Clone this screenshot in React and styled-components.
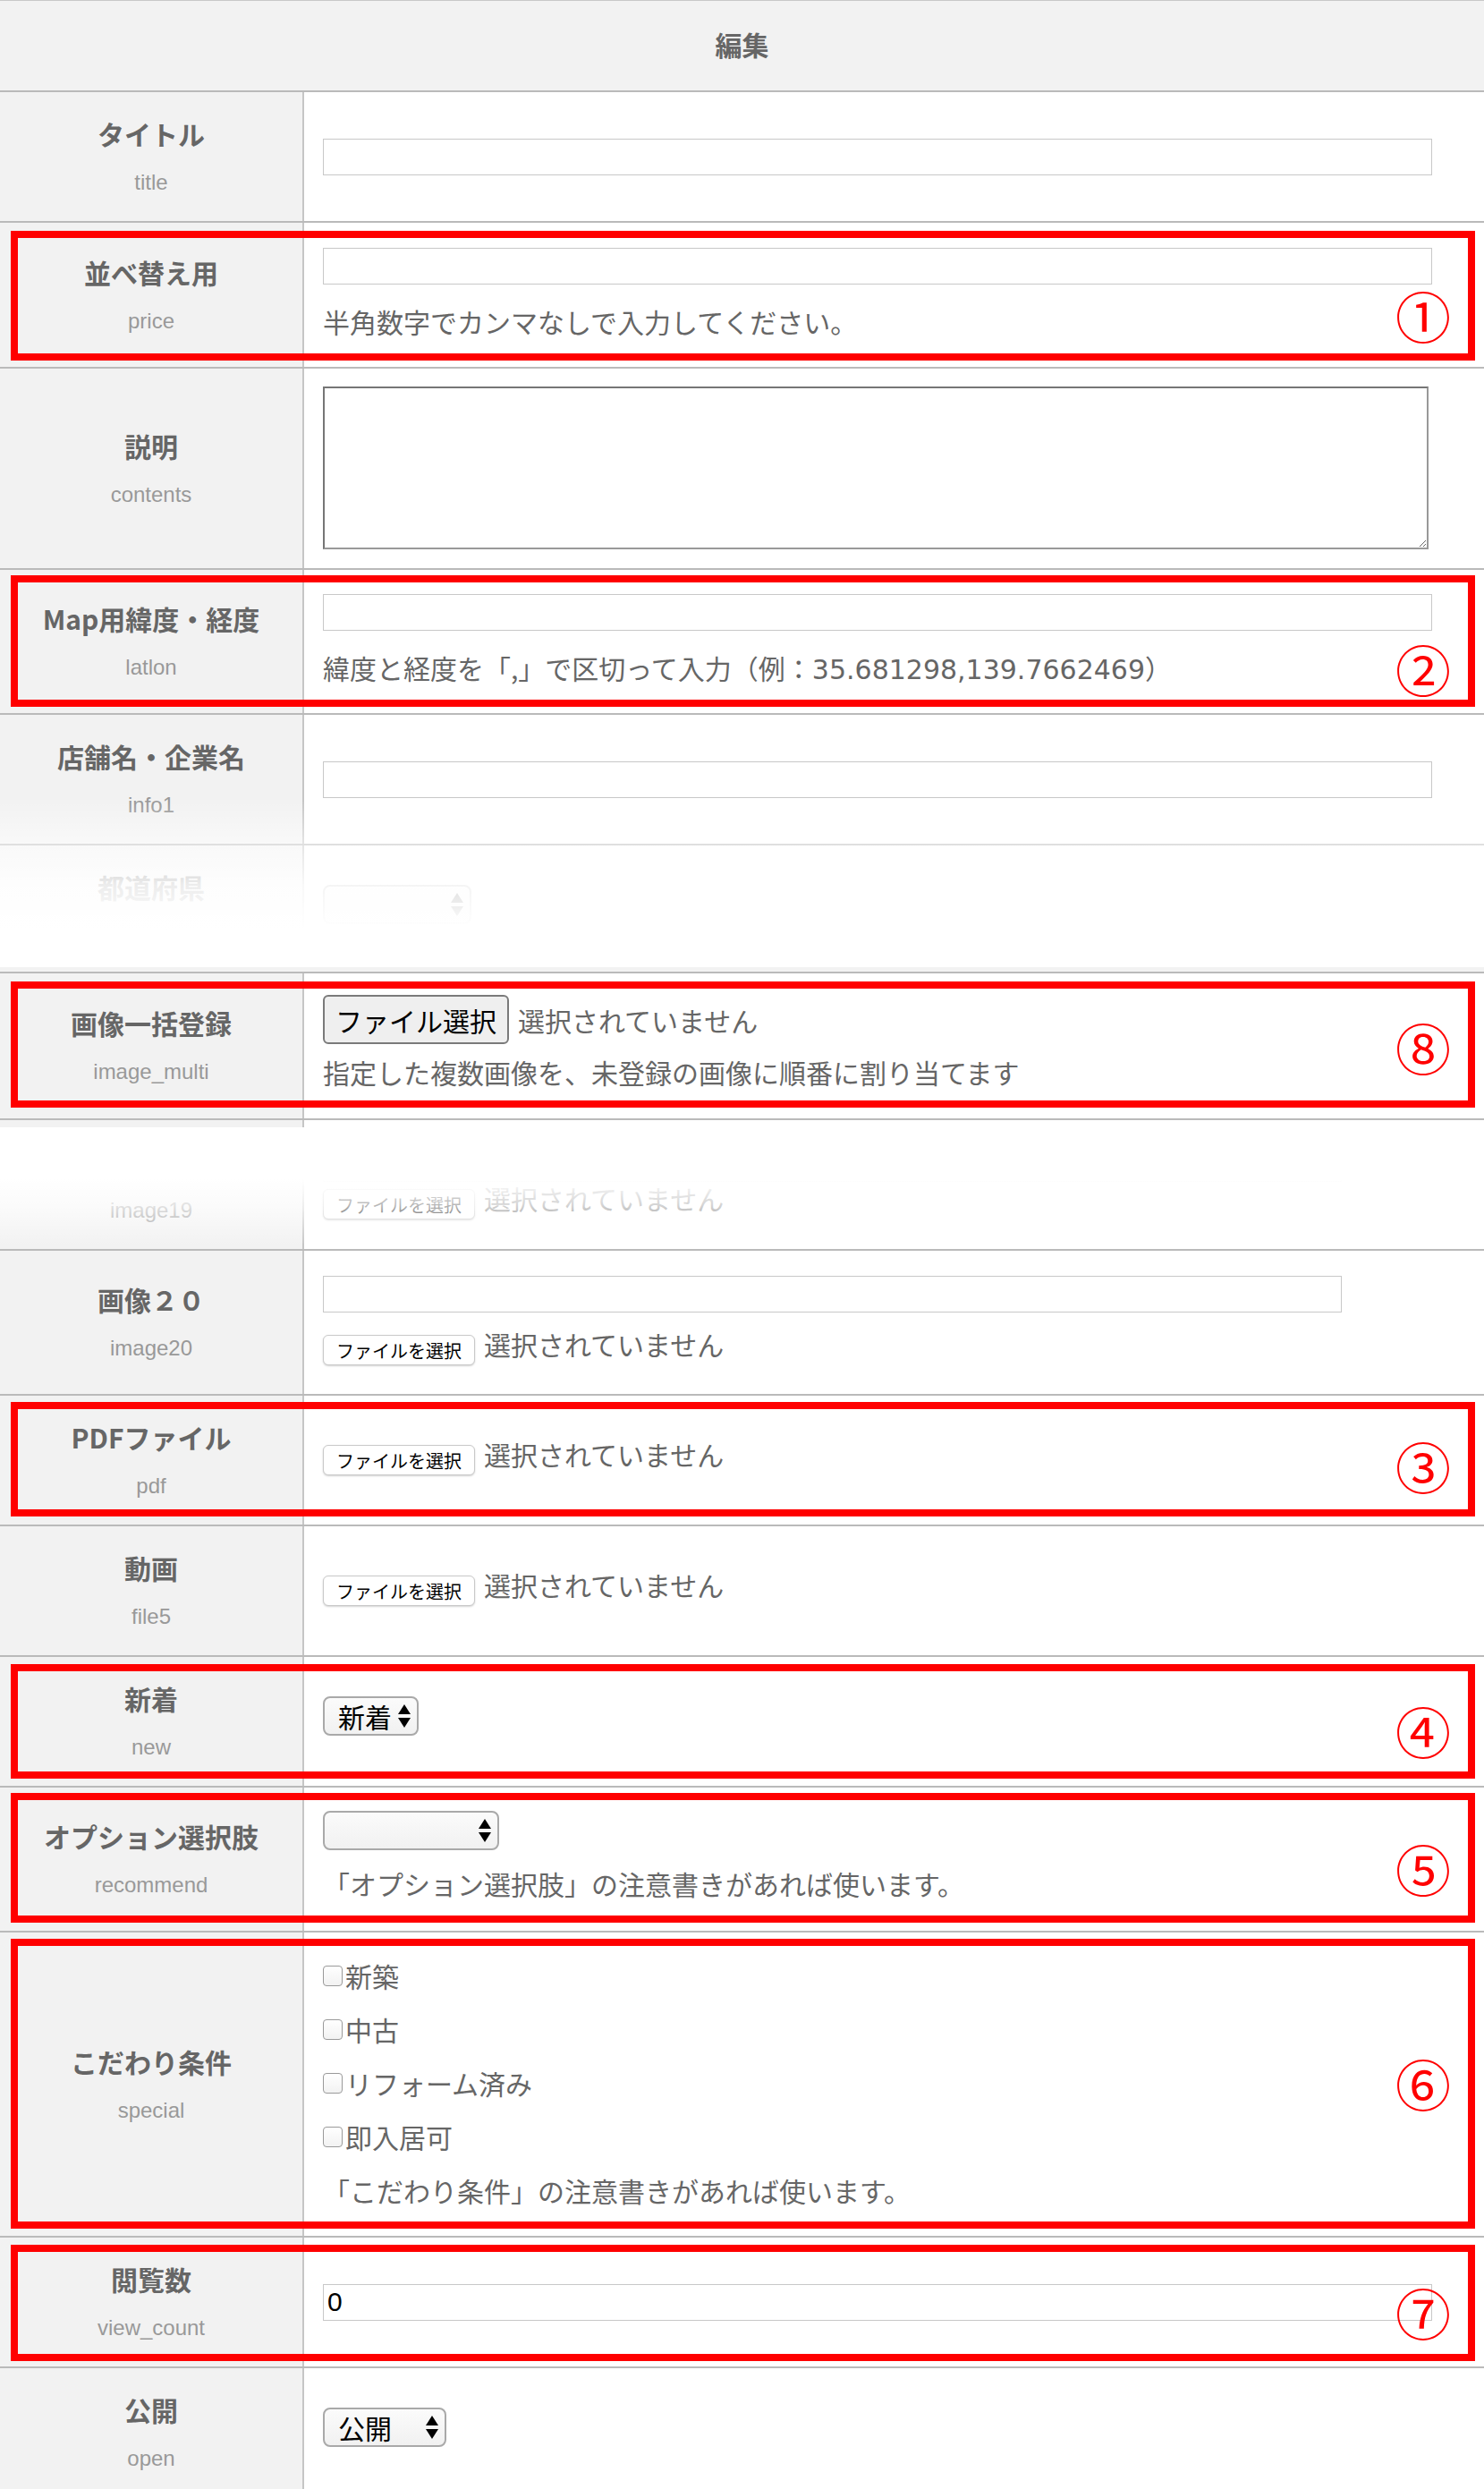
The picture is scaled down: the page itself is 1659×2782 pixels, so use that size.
import React from "react";
import styled, { createGlobalStyle } from "styled-components";

const GlobalStyle = createGlobalStyle`
  html, body { margin: 0; padding: 0; background: #fff; overflow: hidden; }
  body { font-family: "Noto Sans CJK JP", "Noto Sans", sans-serif; color: #666; }
  * { box-sizing: border-box; }
`;

const Page = styled.div`
  width: 1659px;
  background: #fff;
`;

const Header = styled.div`
  height: 103px;
  padding-bottom: 4px;
  border-top: 1px solid #c8c8c8;
  border-bottom: 2px solid #bababa;
  background: #f2f2f2;
  display: flex;
  align-items: center;
  justify-content: center;
  font-size: 30px;
  font-weight: 700;
  color: #666;
`;

const Row = styled.div`
  position: relative;
  display: flex;
  border-bottom: 2px solid #bababa;
`;

const LabelCell = styled.div`
  width: 340px;
  flex: none;
  background: #f2f2f2;
  border-right: 2px solid #c6c6c6;
  display: flex;
  flex-direction: column;
  align-items: center;
  justify-content: center;
  padding: 26px 8px 29px;
  gap: 21px;
`;

const LabelMain = styled.div`
  font-size: 30px;
  line-height: 40px;
  font-weight: 700;
  color: #666;
  white-space: nowrap;
`;

const LabelSub = styled.div`
  font-family: "Liberation Sans", Arial, sans-serif;
  font-size: 24px;
  line-height: 28px;
  color: #999;
  white-space: nowrap;
`;

const ContentCell = styled.div`
  flex: 1;
  min-width: 0;
  display: flex;
  flex-direction: column;
  justify-content: center;
  align-items: flex-start;
  padding: ${(p) => p.$pad || "28px 0 28px 21px"};
  gap: ${(p) => (p.$gap ?? 18)}px;
`;

const TextInput = styled.input`
  width: ${(p) => p.$w || 1240}px;
  height: 41px;
  margin: 0;
  padding: 0 4px;
  border: 1px solid #c8c8c8;
  background: #fff;
  font-family: "Liberation Sans", "Noto Sans CJK JP", sans-serif;
  font-size: 30px;
  color: #000;
  outline: none;
`;

const TextArea = styled.textarea`
  display: block;
  width: 1236px;
  height: 182px;
  margin: 0;
  border: 2px solid;
  border-color: #767676 #999 #999 #767676;
  background: #fff;
  resize: both;
  outline: none;
`;

const Note = styled.div`
  height: ${(p) => p.$lh || 46}px;
  font-size: 30px;
  line-height: ${(p) => p.$lh || 46}px;
  color: #666;
  white-space: nowrap;
`;

const Latin = styled.span`
  font-family: "DejaVu Sans", "Liberation Sans", sans-serif;
  font-size: 30px;
  line-height: 1;
`;

const FileLine = styled.div`
  display: flex;
  align-items: center;
  gap: 10px;
  height: ${(p) => p.$h || 44}px;
`;

const FileButton = styled.span`
  display: inline-flex;
  align-items: center;
  height: 34px;
  padding: 0 14px;
  border: 1px solid #c9c9c9;
  border-radius: 6px;
  background: #fff;
  box-shadow: 0 1px 2px rgba(0, 0, 0, 0.18);
  font-size: 20px;
  color: #000;
  white-space: nowrap;
`;

const BigFileButton = styled.span`
  display: inline-flex;
  align-items: center;
  height: 55px;
  padding: 0 12px;
  border: 2px solid #7a7a7a;
  border-radius: 6px;
  background: #efefef;
  font-size: 30px;
  color: #000;
  white-space: nowrap;
`;

const FileStatus = styled.span`
  font-size: 30px;
  line-height: 40px;
  color: #666;
  white-space: nowrap;
  margin-bottom: ${(p) => p.$lift || 0}px;
`;

const SelectBox = styled.div`
  width: ${(p) => p.$w}px;
  height: 44px;
  margin-bottom: ${(p) => p.$mb || 0}px;
  padding: 0 7px 0 15px;
  border: 2px solid #a9a9a9;
  border-radius: 8px;
  background: linear-gradient(#fbfbfb, #f1f1f1);
  display: flex;
  align-items: center;
  justify-content: space-between;
  font-size: 30px;
  color: #000;
  white-space: nowrap;
`;

const CheckLine = styled.label`
  display: flex;
  align-items: center;
  gap: 3px;
  height: 60px;
  font-size: 30px;
  color: #666;
  white-space: nowrap;
`;

const CheckBox = styled.input.attrs({ type: "checkbox" })`
  appearance: none;
  width: 22px;
  height: 23px;
  margin: 0;
  border: 1px solid #9a9a9a;
  border-radius: 4px;
  background: linear-gradient(#fff, #f2f2f2);
`;

const RedBox = styled.div`
  position: absolute;
  left: 12px;
  right: 10px;
  top: ${(p) => p.$t}px;
  bottom: ${(p) => p.$b}px;
  border: 8px solid #ff0000;
  pointer-events: none;
`;

const Marker = styled.span`
  position: absolute;
  right: 36px;
  top: ${(p) => p.$cy - 32}px;
  width: 64px;
  height: 64px;
  display: flex;
  align-items: center;
  justify-content: center;
  font-family: "Noto Sans CJK JP", sans-serif;
  font-size: 62px;
  line-height: 1;
  color: #ff0000;
`;

const FadeGroup = styled.div`
  position: relative;
  height: 282px;
  overflow: hidden;
`;

const FadeOut = styled.div`
  position: absolute;
  inset: 0;
  pointer-events: none;
  background: linear-gradient(
    to bottom,
    rgba(255, 255, 255, 0) 96px,
    rgba(255, 255, 255, 0.55) 146px,
    rgba(255, 255, 255, 0.88) 190px,
    #fff 240px
  );
`;

const FadeIn = styled.div`
  position: absolute;
  left: 0;
  right: 0;
  top: 0;
  bottom: 2px;
  pointer-events: none;
  background: linear-gradient(
    to bottom,
    rgba(255, 255, 255, 0) 8px,
    #fff 8px,
    #fff 66px,
    rgba(255, 255, 255, 0.72) 95px,
    rgba(255, 255, 255, 0) 140px
  );
`;

const Seam = styled.div`
  height: 7px;
  background: #f2f2f2;
  border-bottom: 2px solid #bababa;
`;

const Arrows = () => (
  <svg width="14" height="26" viewBox="0 0 14 26" aria-hidden="true">
    <path d="M7 0L14 11H0Z" fill="#000" />
    <path d="M0 15H14L7 26Z" fill="#000" />
  </svg>
);

const Label = ({ main, sub }) => (
  <LabelCell>
    <LabelMain>{main}</LabelMain>
    <LabelSub>{sub}</LabelSub>
  </LabelCell>
);

const Highlight = ({ t, b, cy, n }) => (
  <>
    <RedBox $t={t} $b={b} />
    <Marker $cy={cy}>{n}</Marker>
  </>
);

const ChromeFile = ({ lift = 14 }) => (
  <FileLine>
    <FileButton>ファイルを選択</FileButton>
    <FileStatus $lift={lift}>選択されていません</FileStatus>
  </FileLine>
);

export default function App() {
  return (
    <>
      <GlobalStyle />
      <Page>
        <Header>編集</Header>

        <Row>
          <Label main="タイトル" sub="title" />
          <ContentCell>
            <TextInput readOnly />
          </ContentCell>
        </Row>

        <Row>
          <Label main="並べ替え用" sub="price" />
          <ContentCell $pad="28px 0 28px 21px" $gap={18}>
            <TextInput readOnly />
            <Note>半角数字でカンマなしで入力してください。</Note>
          </ContentCell>
          <Highlight t={9} b={7} cy={103} n="①" />
        </Row>

        <Row>
          <Label main="説明" sub="contents" />
          <ContentCell $pad="20px 0 21px 21px">
            <TextArea readOnly />
          </ContentCell>
        </Row>

        <Row>
          <Label main="Map用緯度・経度" sub="latlon" />
          <ContentCell $pad="27px 0 28px 21px" $gap={18}>
            <TextInput readOnly />
            <Note>
              緯度と経度を「,」で区切って入力（例：<Latin>35.681298,139.7662469</Latin>）
            </Note>
          </ContentCell>
          <Highlight t={6} b={7} cy={110} n="②" />
        </Row>

        <FadeGroup>
          <Row>
            <Label main="店舗名・企業名" sub="info1" />
            <ContentCell>
              <TextInput readOnly />
            </ContentCell>
          </Row>
          <Row>
            <Label main="都道府県" sub="pref" />
            <ContentCell>
              <SelectBox $w={166} $mb={12}>
                <span />
                <Arrows />
              </SelectBox>
            </ContentCell>
          </Row>
          <FadeOut />
        </FadeGroup>
        <Seam />

        <Row>
          <Label main="画像一括登録" sub="image_multi" />
          <ContentCell $pad="24px 0 29px 21px" $gap={8}>
            <FileLine $h={55}>
              <BigFileButton>ファイル選択</BigFileButton>
              <FileStatus>選択されていません</FileStatus>
            </FileLine>
            <Note>指定した複数画像を、未登録の画像に順番に割り当てます</Note>
          </ContentCell>
          <Highlight t={9} b={12} cy={82} n="⑧" />
        </Row>

        <Row>
          <Label main="画像１９" sub="image19" />
          <ContentCell $pad="28px 0 28px 21px" $gap={3}>
            <TextInput readOnly $w={1139} />
            <ChromeFile />
          </ContentCell>
          <FadeIn />
        </Row>

        <Row>
          <Label main="画像２０" sub="image20" />
          <ContentCell $pad="28px 0 27px 21px" $gap={20}>
            <TextInput readOnly $w={1139} />
            <ChromeFile />
          </ContentCell>
        </Row>

        <Row>
          <Label main="PDFファイル" sub="pdf" />
          <ContentCell>
            <ChromeFile />
          </ContentCell>
          <Highlight t={7} b={9} cy={78} n="③" />
        </Row>

        <Row>
          <Label main="動画" sub="file5" />
          <ContentCell>
            <ChromeFile />
          </ContentCell>
        </Row>

        <Row>
          <Label main="新着" sub="new" />
          <ContentCell>
            <SelectBox $w={107} $mb={12}>
              <span>新着</span>
              <Arrows />
            </SelectBox>
          </ContentCell>
          <Highlight t={8} b={8} cy={82} n="④" />
        </Row>

        <Row>
          <Label main="オプション選択肢" sub="recommend" />
          <ContentCell $pad="26px 0 30px 21px" $gap={14}>
            <SelectBox $w={197}>
              <span />
              <Arrows />
            </SelectBox>
            <Note>「オプション選択肢」の注意書きがあれば使います。</Note>
          </ContentCell>
          <Highlight t={6} b={9} cy={90} n="⑤" />
        </Row>

        <Row>
          <Label main="こだわり条件" sub="special" />
          <ContentCell $pad="18px 0 21px 21px" $gap={0}>
            <CheckLine><CheckBox />新築</CheckLine>
            <CheckLine><CheckBox />中古</CheckLine>
            <CheckLine><CheckBox />リフォーム済み</CheckLine>
            <CheckLine><CheckBox />即入居可</CheckLine>
            <Note $lh={60}>「こだわり条件」の注意書きがあれば使います。</Note>
          </ContentCell>
          <Highlight t={7} b={8} cy={168} n="⑥" />
        </Row>

        <Row>
          <Label main="閲覧数" sub="view_count" />
          <ContentCell>
            <TextInput readOnly value="0" />
          </ContentCell>
          <Highlight t={8} b={6} cy={83} n="⑦" />
        </Row>

        <Row>
          <Label main="公開" sub="open" />
          <ContentCell>
            <SelectBox $w={138} $mb={12}>
              <span>公開</span>
              <Arrows />
            </SelectBox>
          </ContentCell>
        </Row>
      </Page>
    </>
  );
}
